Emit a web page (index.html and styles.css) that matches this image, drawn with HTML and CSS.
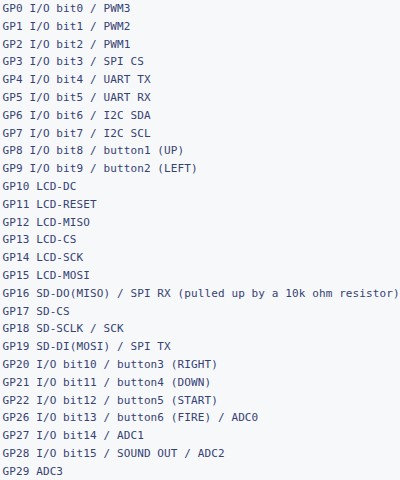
FILE: index.html
```html
<!DOCTYPE html>
<html>
<head>
<meta charset="utf-8">
<link rel="stylesheet" href="styles.css">
</head>
<body>
<div class="code-block">
<pre class="code">GP0 I/O bit0 / PWM3
GP1 I/O bit1 / PWM2
GP2 I/O bit2 / PWM1
GP3 I/O bit3 / SPI CS
GP4 I/O bit4 / UART TX
GP5 I/O bit5 / UART RX
GP6 I/O bit6 / I2C SDA
GP7 I/O bit7 / I2C SCL
GP8 I/O bit8 / button1 (UP)
GP9 I/O bit9 / button2 (LEFT)
GP10 LCD-DC
GP11 LCD-RESET
GP12 LCD-MISO
GP13 LCD-CS
GP14 LCD-SCK
GP15 LCD-MOSI
GP16 SD-DO(MISO) / SPI RX (pulled up by a 10k ohm resistor)
GP17 SD-CS
GP18 SD-SCLK / SCK
GP19 SD-DI(MOSI) / SPI TX
GP20 I/O bit10 / button3 (RIGHT)
GP21 I/O bit11 / button4 (DOWN)
GP22 I/O bit12 / button5 (START)
GP26 I/O bit13 / button6 (FIRE) / ADC0
GP27 I/O bit14 / ADC1
GP28 I/O bit15 / SOUND OUT / ADC2
GP29 ADC3</pre>
</div>
</body>
</html>
```

FILE: styles.css
```css
html, body {
  margin: 0;
  padding: 0;
  background: #f6f8fa;
}

.code-block {
  width: 400px;
  height: 480px;
  overflow: hidden;
  background: #f6f8fa;
}

.code {
  margin: 0;
  padding: 0 0 0 2.5px;
  font-family: "DejaVu Sans Mono", monospace;
  font-size: 11px;
  letter-spacing: 0.11px;
  line-height: 17.8px;
  color: #364274;
  white-space: pre;
}
```
